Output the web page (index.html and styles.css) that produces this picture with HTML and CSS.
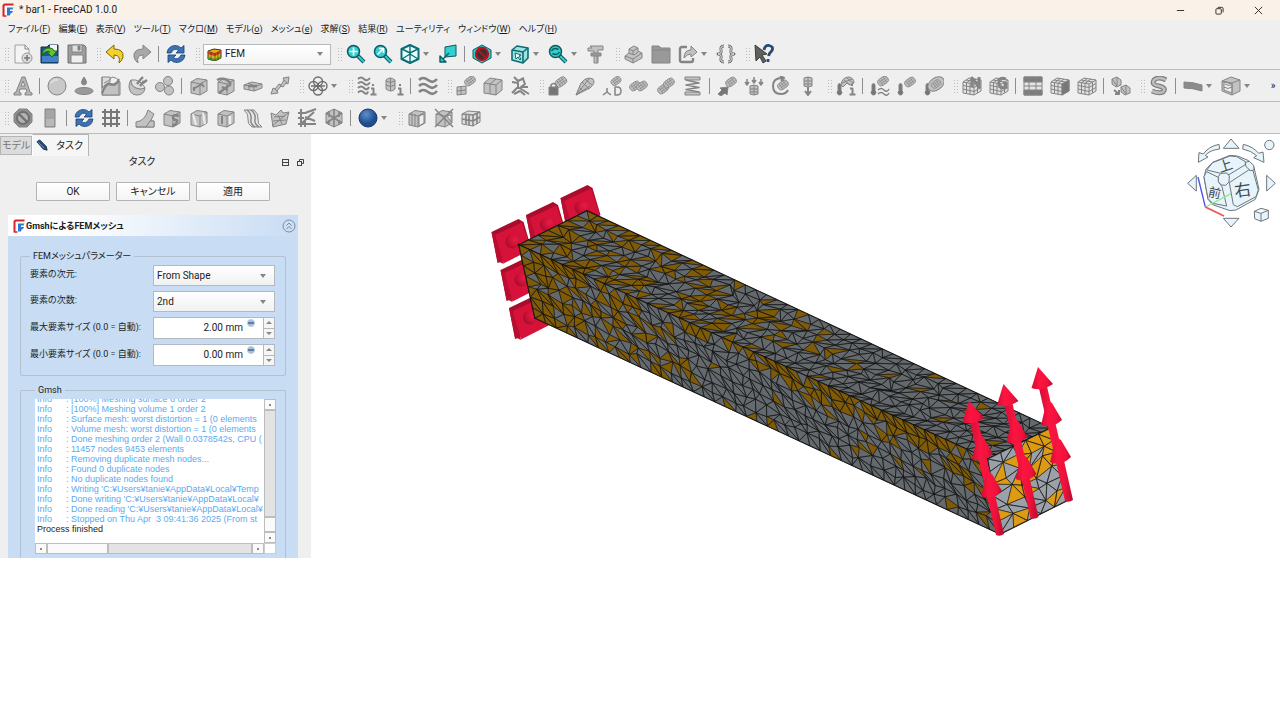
FILE: index.html
```html
<!DOCTYPE html>
<html lang="ja">
<head>
<meta charset="utf-8">
<title>* bar1 - FreeCAD 1.0.0</title>
<link rel="stylesheet" href="styles.css">
</head>
<body>
<svg class="defs" aria-hidden="true">
  <symbol id="logo" viewBox="0 0 12 14">
    <path d="M3 3h8v10H3z" fill="#fff"/>
    <path d="M1.500 13.500V3q0-1.500 1.500-1.500h8.500" fill="none" stroke="#d8232f" stroke-width="2"/>
    <path d="M1.500 13h3" stroke="#d8232f" stroke-width="1.500"/>
    <path d="M5 4.500h6.500l-1 2H8v1.500h3l-1 2-1.500.5-.5 2H5z" fill="#2f78d0"/>
  </symbol>
</svg>
<header class="titlebar">
  <svg class="logo"><use href="#logo"/></svg>
  <h1 class="title">* bar1 - FreeCAD 1.0.0</h1>
  <div class="window-buttons">
    <button aria-label="最小化"><svg viewBox="0 0 10 10"><path d="M1 5h8"/></svg></button>
    <button aria-label="元に戻す"><svg viewBox="0 0 10 10"><rect x="1" y="3" width="6" height="6" rx="1"/><path d="M3 1.500h4.500q1.500 0 1.500 1.500v4"/></svg></button>
    <button aria-label="閉じる"><svg viewBox="0 0 10 10"><path d="M1 1l8 8M9 1l-8 8"/></svg></button>
  </div>
</header>
<nav class="menubar">
  <button>ファイル(<u>F</u>)</button>
  <button>編集(<u>E</u>)</button>
  <button>表示(<u>V</u>)</button>
  <button>ツール(<u>T</u>)</button>
  <button>マクロ(<u>M</u>)</button>
  <button>モデル(<u>o</u>)</button>
  <button>メッシュ(<u>e</u>)</button>
  <button>求解(<u>S</u>)</button>
  <button>結果(<u>R</u>)</button>
  <button>ユーティリティ</button>
  <button>ウィンドウ(<u>W</u>)</button>
  <button>ヘルプ(<u>H</u>)</button>
</nav>
<div class="toolbar" role="toolbar" data-row="0" aria-label="標準"></div>
<div class="toolbar" role="toolbar" data-row="1" aria-label="FEM"></div>
<div class="toolbar" role="toolbar" data-row="2" aria-label="結果"></div>

<div class="workspace">
  <aside class="panel">
    <div class="tabs" role="tablist">
      <button class="tab" role="tab">モデル</button>
      <button class="tab tab-active" role="tab" aria-selected="true">
        <svg class="pen" viewBox="0 0 14 14"><path d="M1 3l3-2 7 7 1 4-4-1z" fill="#244a7c" stroke="#16304f"/><path d="M2 3l7 7" stroke="#6c96c8"/></svg>
        タスク
      </button>
    </div>
    <div class="dock-title">
      <h2>タスク</h2>
      <button aria-label="折りたたむ"><svg viewBox="0 0 7 7"><rect x=".5" y=".5" width="6" height="6"/><path d="M0 3.500h7"/></svg></button>
      <button aria-label="切り離す"><svg viewBox="0 0 7 7"><rect x=".5" y="2.500" width="4" height="4"/><path d="M2.500 2V.5h4v4H5"/></svg></button>
    </div>
    <div class="actions">
      <button>OK</button><button>キャンセル</button><button>適用</button>
    </div>
    <section class="task">
      <header class="task-head">
        <svg class="logo"><use href="#logo"/></svg>
        <h3>GmshによるFEMメッシュ</h3>
        <button aria-label="たたむ"><svg viewBox="0 0 14 14"><circle cx="7" cy="7" r="6"/><path d="M4.500 6.500L7 4l2.500 2.500M4.500 10L7 7.500 9.500 10"/></svg></button>
      </header>
      <div class="task-body">
        <fieldset class="group params">
          <legend>FEMメッシュパラメーター</legend>
          <label for="dim">要素の次元:</label>
          <div class="combo"><select id="dim"><option>From Shape</option></select></div>
          <label for="order">要素の次数:</label>
          <div class="combo"><select id="order"><option>2nd</option></select></div>
          <label for="max">最大要素サイズ (0.0 = 自動):</label>
          <div class="spin"><input id="max" value="2.00 mm"><i class="fx"></i><div class="steps"><button aria-label="増やす"></button><button class="down" aria-label="減らす"></button></div></div>
          <label for="min">最小要素サイズ (0.0 = 自動):</label>
          <div class="spin"><input id="min" value="0.00 mm"><i class="fx"></i><div class="steps"><button aria-label="増やす"></button><button class="down" aria-label="減らす"></button></div></div>
        </fieldset>
        <fieldset class="group output">
          <legend>Gmsh</legend>
          <div class="log">
            <div class="log-view"><div class="log-lines" role="log"></div></div>
            <div class="vbar"><i class="arrow up"></i><i class="track"></i><i class="thumb"></i><i class="arrow dn"></i></div>
            <div class="hbar"><i class="arrow lf"></i><i class="thumb"></i><i class="track"></i><i class="arrow rt"></i></div>
            <div class="corner"></div>
          </div>
        </fieldset>
      </div>
    </section>
  </aside>
  <main class="view">
    <svg class="scene" viewBox="311 134 969 586" role="img" aria-label="FEMメッシュ">
      <defs>
        <radialGradient id="ball" cx=".7" cy=".35" r=".8"><stop offset="0" stop-color="#e61c44"/><stop offset=".5" stop-color="#cf1237"/><stop offset="1" stop-color="#9c0c2a"/></radialGradient>
        <linearGradient id="cone" x1="0" x2="1"><stop offset="0" stop-color="#d00e36"/><stop offset=".35" stop-color="#fb1540"/><stop offset=".75" stop-color="#f0123c"/><stop offset="1" stop-color="#b50c2e"/></linearGradient>
        <g id="plate">
          <path d="M491.500 232L518.500 219l5 3 8 27-28 12-6 2z" fill="#a80d2c"/>
          <path d="M495 235l27-12.500 9 27-27.500 14z" fill="#d6123a"/>
          <path d="M491.500 232l3.500 3 8.500 29-6-3z" fill="#b80f31"/>
          <circle cx="512.500" cy="241.500" r="7" fill="url(#ball)"/>
        </g>
        <g id="load" fill="url(#cone)">
          <path d="M969 418l8-2 27 118q-4 3-8 1z"/>
          <path d="M987 471L981 496q11 5 21-5l-10-17z"/>
          <path d="M978 434L972 459q11 4 21-5l-10-17z"/>
          <path d="M969 401L962.500 422q10 4 21.500-4z"/>
        </g>
      </defs>
      <use href="#plate" x="69" y="-34"/>
      <use href="#plate" x="34.500" y="-17"/>
      <use href="#plate" x="17.500" y="76"/>
      <use href="#plate" x="9" y="38"/>
      <use href="#plate"/>
      <g id="mesh"></g>
      <use href="#load"/><use href="#load" x="34.500" y="-17"/><use href="#load" x="69" y="-34"/>
      <g class="navcube" transform="translate(1180 130) scale(.3333)">
        <path d="M153 27l24 28h-47zM153 291l24-26h-47zM23 160l26-24v47zM286 160l-26-24v47z"/>
        <path d="M117 43Q85 50 70 72L57 68l-2 29 29-16-8-5Q90 60 119 57z"/>
        <path d="M190 43Q220 50 236 70l13-4 3 31-31-14 9-6Q214 62 188 57z"/>
        <circle cx="268" cy="45" r="14"/>
        <path d="M223 244l20-9 22 6v24l-22 9-19-8zM223 244l20 6 22-9M243 250v24"/>
        <path d="M72 142L78 118L98 97L150 76L172 78L206 92L222 112L237 178L226 208L168 240L150 242L98 224L84 208Z"/>
        <path d="M80 120L98 98L150 78L170 80L196 95L196 104L147 134L122 130Z"/>
        <path d="M72 140L80 125L115 142L116 156L126 170L140 228L98 220L84 206Z"/>
        <path d="M148 158L206 120L219 122L235 180L228 200L172 230L160 224Z"/>
        <path d="M115 140L122 130L140 129L148 138L147 156L137 166L124 165L115 155Z"/>
        <path d="M196 97L208 94L221 106L222 120L212 122L198 110Z"/>
        <path class="z-axis" d="M76 231L54 141"/>
        <path class="y-axis" d="M76 231l77-40"/>
        <path class="x-axis" d="M76 231l56 27"/>
        <text x="163" y="198" font-size="50" transform="rotate(-8 187 180)">右</text>
        <text x="85" y="202" font-size="38" transform="rotate(12 104 188)">前</text>
        <text x="115" y="122" font-size="42" transform="rotate(-18 136 106)">上</text>
      </g>
    </svg>
  </main>
</div>
<script src="app.js"></script>
</body>
</html>
```
FILE: styles.css
```css
* { box-sizing: border-box; }
body {
  margin: 0;
  background: #fff;
  color: #1c1c1c;
  font: 10px/12px Roboto, "Noto Sans CJK JP", sans-serif;
  font-feature-settings: "palt";
  overflow: hidden;
}
button, input, select { font: inherit; color: inherit; font-feature-settings: inherit; margin: 0; padding: 0; border: 0; background: none; }
h1, h2, h3 { margin: 0; font: inherit; }
.defs { display: none; }
.logo { width: 12px; height: 14px; flex: none; }

.titlebar { display: flex; align-items: center; height: 20px; padding-left: 2px; background: #faf1e8; }
.title { flex: 1; margin-left: 5px; }
.window-buttons { display: flex; padding-right: 2px; }
.window-buttons button { width: 39px; height: 20px; display: grid; place-items: center; }
.window-buttons svg { width: 9px; height: 9px; fill: none; stroke: #222; }

.menubar { display: flex; height: 18px; padding: 0 8px; gap: 8px; background: #efefef; align-items: center; font-size: 9px; }
.menubar button { white-space: nowrap; }

.toolbar { display: flex; align-items: center; height: 32px; padding-top: 1px; background: #efefef; border-bottom: 1px solid #bdbdbd; }
.grip { flex: none; width: 11px; height: 15px; display: flex; justify-content: flex-end; }
.grip::after { content: ""; width: 5px; background: radial-gradient(circle, #bbb 1px, transparent 1px) 0 0 / 3px 3px; }
.grip:first-child { width: 9px; }
.tool { flex: none; width: 27px; height: 26px; display: grid; place-items: center; }
.tool svg { width: 20px; height: 20px; fill: #c2c2c2; stroke: #848484; stroke-linejoin: round; }
.sep { flex: none; width: 7px; height: 16px; display: flex; justify-content: center; }
.sep::after { content: ""; width: 1px; background: #8d8d8d; }
.caret { flex: none; width: 11px; height: 20px; display: flex; align-items: center; justify-content: flex-start; }
.caret::after, .combo::after, .toolbar-combo::after { content: ""; border: 3px solid transparent; border-top: 4px solid #858585; border-bottom: 0; }
.more { margin-left: auto; width: 14px; }
.toolbar-combo { display: flex; align-items: center; flex: none; width: 128px; height: 21px; margin-left: 3px; padding: 0 7px 0 3px; border: 1px solid #b9b9b9; background: linear-gradient(#fff, #f4f4f4); }
.toolbar-combo svg { width: 15px; height: 13px; }
.toolbar-combo select { flex: 1; appearance: none; margin-left: 3px; }

.workspace { display: flex; align-items: flex-start; }
.panel { flex: none; width: 311px; padding-right: 13px; background: #efefef; }
.tabs { display: flex; align-items: flex-end; height: 22px; }
.tab { height: 19px; padding: 0 1px; border: 1px solid #b5b5b5; background: #dcdcdc; color: #777; margin-bottom: 1px; }
.tab-active { display: flex; align-items: center; height: 22px; width: 57px; padding-left: 3px; gap: 7px; margin-bottom: 0; background: #f6f6f6; color: #1c1c1c; border-left-color: #fff; border-bottom: 0; white-space: nowrap; }
.pen { width: 13px; height: 13px; }
.dock-title { display: flex; align-items: center; height: 12px; gap: 8px; padding-left: 10px; margin-right: -6px; }
.dock-title h2 { flex: 1; text-align: center; }
.dock-title svg { display: block; width: 7px; height: 7px; fill: none; stroke: #444; }
.actions { display: flex; gap: 6px; padding: 14px 28px 14px 36px; }
.actions button { flex: 1; height: 19px; border: 1px solid #b4b4b4; border-radius: 1px; background: linear-gradient(#fff, #f4f4f4); }

.task { margin-left: 8px; }
.task-head { display: flex; align-items: center; height: 21px; padding: 0 2px 0 5px; background: linear-gradient(90deg, #fff, #fff 20%, #c8dcf4); }
.task-head h3 { flex: 1; font-size: 9px; font-weight: bold; margin-left: 1px; }
.task-head button svg { display: block; width: 14px; height: 14px; fill: none; stroke: #7d8da3; }
.task-body { padding: 14px 12px 0; background: #c8dcf4; }
.group { min-width: 0; margin: 0; border: 1px solid #b3c0cf; border-radius: 2px; }
.group legend { padding: 0 3px; font-size: 9px; }
.params { display: grid; grid-template-columns: minmax(0, 1fr) 122px; row-gap: 5px; align-items: center; padding: 3px 10px 9px 9px; }
.params label { white-space: nowrap; padding-bottom: 3px; font-size: 9px; }
.combo, .spin { position: relative; display: flex; align-items: center; height: 21px; border: 1px solid #b4b9c0; background: linear-gradient(#fff, #f1f1f1); }
.combo { padding: 0 8px 0 3px; }
.combo select { flex: 1; appearance: none; }
.spin { height: 22px; background: #fff; }
.spin input { flex: 1; min-width: 0; text-align: right; padding-right: 20px; }
.fx { position: absolute; right: 19px; top: 1px; width: 8px; height: 8px; border-radius: 4px; background: #a3bdd8; border: 1px solid #b8cce0; }
.fx::after { content: ""; display: block; height: 2px; margin-top: 2px; background: #5d7fa3; }
.steps { display: flex; flex-direction: column; width: 11px; align-self: stretch; border-left: 1px solid #b4b9c0; background: #f5f5f5; }
.steps button { flex: 1; display: grid; place-items: center; }
.steps .down { border-top: 1px solid #b4b9c0; }
.steps button::after { content: ""; border: 3px solid transparent; border-top: 0; border-bottom: 3px solid #888; }
.steps .down::after { border-bottom: 0; border-top: 3px solid #888; }

.output { margin-top: 8px; padding: 3px 9px 4px 14px; border-bottom: 0; border-radius: 2px 2px 0 0; }
.log { display: grid; grid-template: 144px 11px / minmax(0, 1fr) 12px; background: #fff; }
.log-view { overflow: hidden; display: flex; align-items: flex-end; padding: 0 0 9px 2px; }
.log-lines { flex: 1; min-width: 0; font-family: "Liberation Sans", sans-serif; font-size: 9px; line-height: 10px; color: #5aaaf0; }
.line { display: flex; white-space: pre; }
.line b { flex: none; width: 29px; font-weight: normal; }
.line.done { color: #1c1c1c; }
.vbar { display: flex; flex-direction: column; }
.hbar { display: flex; }
.vbar i, .hbar i { border: 1px solid #bdbdbd; background: #fafafa; }
.vbar .track, .hbar .track { flex: 1; background: #e3e3e3; }
.vbar .thumb { height: 15px; }
.hbar .thumb { width: 61px; }
.arrow { flex: none; width: 12px; height: 11px; display: grid; place-items: center; }
.arrow::after { content: ""; width: 2px; height: 2px; background: #8a8a8a; }
.corner { border: 1px solid #ccc; }

.view { flex: 1; min-width: 0; }
.scene { display: block; width: 100%; }
.navcube { fill: #e8f4fb; stroke: #6d757c; stroke-width: 3; stroke-linejoin: round; }
.navcube .x-axis { stroke: #f05050; stroke-width: 5; fill: none; }
.navcube .y-axis { stroke: #90e890; stroke-width: 4; fill: none; }
.navcube .z-axis { stroke: #5050f0; stroke-width: 4; fill: none; }
.navcube text { fill: #40484e; stroke: none; font-family: "Noto Sans CJK JP", sans-serif; }
```
FILE: app.js
```js
// Small building blocks shared by the toolbar icons.
const rod = (x = 12, y = 6, s = 1) =>
  `<g transform="translate(${x} ${y}) rotate(-35) scale(${s})"><rect x="-7" y="-4.500" width="14" height="9" rx="4"/><path d="M-5-1.500H6M-5 1.500H6M-3-4v8M0-4v8M3-4v8" fill="none" stroke-width=".8"/></g>`;
const box = (inner = '') =>
  `<path d="M2 6l6-3.500 10 1.500v11l-7 4-9-2z"/><path d="M2 6l9 2 7-4M11 8v11" fill="none"/>${inner}`;
const meshBox = (inner = '') =>
  `<path d="M1 6l6-4 12 2v11l-7 4-11-2z" fill="#e0e0e0"/><path d="M1 6l11 2 7-4M12 8v11M1 9.500l11 2 7-4M1 13l11 2.500 7-4M4.500 7v10.500M8 7.500v11M15.500 6v11M4 4l11.500 2M10 2.500L4.500 7M14 3L8 7.500" fill="none"/>${inner}`;
const thermo = '<path d="M2 8.500q1.500-2 3 0v6q2 2 0 4-1.500 1-3 0-2-2 0-4z" fill="#777"/>';
const wave = (y) => `<path d="M1 ${y}q4-4 9 0t9-1" fill="none" stroke-width="2.600"/>`;
const info = '<path d="M15 9h2M14 12.500h2.500V18M13.500 18.500h6" fill="none" stroke-width="2"/>';
const teal = 'fill="#2fd0cf" stroke="#0b5a63"';
const lens = (inner) =>
  `<path d="M11 11l7 7" stroke="#0b5a63" stroke-width="4"/><path d="M12 12l6 6" stroke="#2fd0cf" stroke-width="2"/><circle cx="7.500" cy="7.500" r="6" ${teal} stroke-width="1.500"/><g fill="none" stroke="#fff" stroke-width="1.600">${inner}</g>`;
const sync =
  '<g fill="#3b73b5" stroke="#173f72" stroke-width=".8"><path d="M1 9Q2 2 9 1.500q4 0 6 2.500l3-2.500V9h-8l2.500-2.500Q8 3 5 9z"/><path d="M19 11q-1 7-8 7.500-4 0-6-2.500l-3 2.500V11h8l-2.500 2.500Q12 17 15 11z"/></g>';

const icons = {
  doc: '<path d="M2 1h10l4 4v14H2z" fill="#f4f4f4" stroke="#a0a0a0"/><path d="M12 1v4h4" fill="none"/><circle cx="14" cy="14" r="5" fill="#ddd" stroke="#999"/><path d="M14 11v6M11 14h6" stroke="#777" stroke-width="1.600"/>',
  open: '<path d="M1 3h6l2-2h9v18H1z" fill="#1c5690" stroke="#0f2d50"/><path d="M10 1h7v6h-7z" fill="#f4f4f4" stroke="none"/><path d="M2 12h16v6H2z" fill="#3f83c6" stroke="none"/><path d="M2 11Q3 3 10 4q3 0 4 3h3l-5 6-5-5h3Q6 6 2 11z" fill="#63c132" stroke="#1f6b14"/>',
  save: '<path d="M1 1h16l2 2v16H1z" fill="#9d9d9d" stroke="#707070"/><path d="M5 1h10v7H5z" fill="#dedede"/><path d="M4 11h12v8H4z" fill="#f0f0f0"/><path d="M11 2h2v4h-2z" fill="#777"/>',
  undo: '<path d="M1 8l8-7v4q10 0 9 8-1 4-4 6 2-8-5-8v4z" fill="#f3d22d" stroke="#7d6608"/>',
  redo: '<path d="M19 8l-8-7v4Q1 5 2 13q1 4 4 6-2-8 5-8v4z" fill="#a9a9a9"/>',
  sync,
  fit: lens('<path d="M7.500 3.500v8M3.500 7.500h8"/>'),
  zoomsel: lens('<path d="M4.500 10.500l5-5M6 4.500h4.500V9"/>'),
  iso: '<path d="M1.500 5L10 1l8.500 4v10L10 19l-8.500-4z" fill="#e9ffff" stroke="#0d6d74" stroke-width="2"/><path d="M2 5l8 4 8-4M10 9v10M2 15l8-5 8 5M10 1v9" fill="none" stroke="#0d6d74" stroke-width="1.400"/>',
  bound: `<path d="M7 3l11-2v11l-11 1z" ${teal}/><path d="M11 9l-6 6M2 12v6h6z" fill="#2fd0cf" stroke="#0b5a63" stroke-width="1.400"/>`,
  block: `<path d="M1 6l9-5 9 5v8l-9 5-9-5z" ${teal}/><circle cx="10" cy="10" r="6" fill="#333" stroke="#b9111b" stroke-width="2.400"/><path d="M6 6l8 8" stroke="#b9111b" stroke-width="2.400"/>`,
  wire: '<path d="M2 6l5-4 11 2v10l-5 5-11-3z" fill="#9ae4e3" stroke="#0d6d74" stroke-width="1.600"/><path d="M2 6l11 2 5-4M13 8v11" fill="none" stroke="#0d6d74" stroke-width="1.600"/><path d="M5 9l6 2-2 1 2 3-1 1-2-3-2 2z" fill="#fff" stroke="#0d6d74"/>',
  sync2: lens('<path d="M3.500 7q2-4 7-1.500M11.500 8q-2 4-7 1.500" stroke="#0b5a63"/>'),
  caliper: '<path d="M4 2h13v4h-5v13H8V7H2V4h4z"/><path d="M5 9h10v3H5z" fill="#999"/><path d="M10 13h2M10 15h2M10 17h2"/>',
  steps: '<path d="M1 12l4-3V5l5-3 4 2v3l4 2v5L9 19l-8-4z"/><path d="M1 12l8 3 9-6M9 15v4M5 9l5 2 4-3M5 5l4 2 5-3M9 7v4" fill="none"/>',
  folder: '<path d="M1 2h7l2 2h9v15H1z" fill="#999"/><path d="M1 6h18"/>',
  share: '<path d="M9 3H4Q2 3 2 5v11q0 2 2 2h9q2 0 2-2v-2" fill="none" stroke-width="2.400"/><path d="M6 14q0-8 7-8V2l6 6-6 5v-3q-4 0-7 4z"/>',
  braces: '<path d="M8 2Q4 2 5 6t-3 4q4 0 3 4t3 4M12 2q4 0 3 4t3 4q-4 0-3 4t-3 4" fill="none" stroke="#666" stroke-width="2.800"/><path d="M8 2Q4 2 5 6t-3 4q4 0 3 4t3 4M12 2q4 0 3 4t3 4q-4 0-3 4t-3 4" fill="none" stroke="#eee" stroke-width="1"/>',
  whats: '<path d="M10 6Q11 1 15 1.500q5 1 3 5-3 3-3.500 5.500M14 15v3" fill="none" stroke="#294b73" stroke-width="2.800"/><path d="M1 1l12 9-5 1 4 6-3 2-3-6-4 4z" fill="#5e625e" stroke="#3b3e3b"/>',
  letter: '<path d="M1 19v-2l2-1L9 1h3l5 15 2 1v2h-7v-2l2-1-1-3H7l-1 3 2 1v2zM8 10h4L10 5z" fill="#b5b5b5"/>',
  sphere: '<circle cx="10" cy="10" r="9" fill="#c8c8c8"/><path d="M4 7q3-4 7-3" fill="none" stroke="#ddd" stroke-width="2"/>',
  drop: '<ellipse cx="10" cy="15" rx="9" ry="3.500" fill="#9a9a9a"/><path d="M10 1q5 7 0 8-5-1 0-8z" fill="#888"/>',
  chart: '<path d="M1 1h8v5q-5 2-8 6z" fill="#ddd"/><path d="M1 1v18h18V6q-3-5-8-5-2 4-8 6" fill="none"/><path d="M1 19Q5 7 10 9t8-4v14z"/><path d="M1 17Q5 6 10 8t8-5" fill="none" stroke-width="2"/>',
  plug: '<path d="M3 4q0 6 5 8t9 0q-1 7-8 7T1 11q0-5 2-7z"/><path d="M3 4q5-1 9 2t5 6q-4 2-9 0T3 4z" fill="#e0e0e0"/><path d="M9 8l4-5M12 10l4-5M12 4l3-3M15 7l4-3" stroke-width="2.400"/>',
  balls: '<circle cx="13" cy="5" r="4.500"/><circle cx="5" cy="11" r="4.500"/><circle cx="14" cy="14.500" r="4.500"/>',
  slot: box('<path d="M4 13l9-5M5 11v4M12 7l3 4" stroke-width="2"/>'),
  slot2: box('<path d="M1 4q8-4 14 4M3 17l12-9M6 11l6 3" stroke-width="2.200" fill="none"/>'),
  slab: '<path d="M1 9l8-3 10 2v4l-8 3-10-2z"/><path d="M1 9l10 2 8-3M11 11v4M5 7l9 4M6 10v4" fill="none"/><path d="M5 10l9 0" stroke-width="2.500"/>',
  rods: '<path d="M1 18l2-6 2 1 4-5 2 1 3-5-1-2 6-1-1 7-2-1-3 4-2-1-4 5 1 2z"/><path d="M5 13l3 3M9 8l3 3M14 4l3 3"/>',
  target: '<g fill="none" stroke="#6d6d6d" stroke-width="1.400"><circle cx="10" cy="5.500" r="4.500"/><circle cx="10" cy="14.500" r="4.500"/><circle cx="5.500" cy="10" r="4.500"/><circle cx="14.500" cy="10" r="4.500"/><path d="M10 7v6M3 10h4M13 10h4"/></g>',
  fluidinfo: '<path d="M1 3q3-3 6 0t6-1M1 7.500q3-3 6 0t6-1M1 12q3-3 6 0t5-1M1 16.500q3-3 6 0t4-1" fill="none" stroke-width="2"/>' + info,
  solidinfo: '<path d="M2 4q4-4 9 0v9q-4 4-9 0z"/><path d="M2 5q4 3 9 0M2 9q4 3 9 0M6.500 2v13" fill="none"/>' + info,
  fluid: wave(4) + wave(10) + wave(16),
  rodplus: rod(14, 5, .8) + '<path d="M1 11l9-1v8l-9 1zM5 11v8M1 15l9-1"/>',
  crate: '<path d="M1 7l6-5 12 2v10l-6 5-12-2z"/><path d="M1 7l12 2 6-5M13 9v10M7 8l6-5M7 8v10" fill="none"/>',
  crack: '<path d="M4 1l4 4 6-3M2 6l6 1v4l-6 6M8 11l11 7M13 3l2 5-4 3 7 0M4 18l6-3 5 4" fill="none" stroke-width="2"/>',
  lock: rod(13, 6, .85) + '<path d="M1 11h9v8H1z" fill="#777"/><path d="M3 11V9q2.500-3 5 0v2" fill="none" stroke-width="1.600"/>',
  cone: '<path d="M1 19l5-12q6-7 12-4 3 4-3 9z"/><path d="M1 19L14 3M1 19l14-9M7 6l7 7M10 3l7 6M4 11l4 4" fill="none"/>',
  rodd: rod(14, 5, .75) + '<path d="M5 12v4l-4 3M5 16l4 3M13 11h2q4 0 4 4t-4 4h-2z" fill="none" stroke-width="1.500"/>',
  rodpair: rod(6, 10, .8) + rod(13, 10, .8),
  rodlong: rod(7, 13, .8) + rod(13, 7, .8),
  spring: '<path d="M2 1h15v3H2zM2 16h15v3H2z"/><path d="M3 4l13 3-13 2 13 2.500-13 2 13 2.500" fill="none" stroke-width="1.600"/>',
  rodarrow: rod(14, 6, .8) + '<path d="M1 18l4-4-2-2 8-1-1 8-2-2-4 3z" fill="#777"/>',
  pressure: '<path d="M6 10q4-2 8 0v8q-4 2-8 0z"/><path d="M6 13h8M6 16h8M10 9v10" fill="none"/><path d="M3 3v6M10 1v6M17 3v6M1 6l2 3 2-3M8 4l2 3 2-3M15 6l2 3 2-3" fill="none" stroke-width="1.500"/>',
  rotate: rod(12, 9, .8) + '<path d="M11 2Q2 2 2 10t8 8q5 0 7-4M9 0l4 2-3 3" fill="none" stroke-width="2"/>',
  weight: '<path d="M6 2q4-2 8 0v8q-4 2-8 0z"/><path d="M6 5h8M6 8h8M10 1v9" fill="none"/><path d="M10 11v7M7 15l3 4 3-4" fill="none" stroke-width="2"/>',
  tempinfo: thermo + '<path d="M5 9q1-8 8-8 5 1 5 6l-4 2-3-2-4 4z"/><path d="M8 4l6 5M11 2l6 5M6 7l10-4" fill="none"/>' + info,
  tempflux: thermo + rod(13, 5, .8) + '<path d="M8 14q3-3 6 0t5-1M8 18q3-3 6 0t5-1" fill="none" stroke-width="1.500"/>',
  temprod: thermo + rod(13, 6, .8),
  tempbody: thermo + '<ellipse cx="12" cy="8" rx="9" ry="6" transform="rotate(-35 12 8)"/>' + rod(12, 8, .7),
  netgen: meshBox('<path d="M10 11V2l7 9V1" fill="none" stroke-width="3"/>'),
  gmsh: meshBox('<path d="M17 3q-7-3-7 4t7 4V7h-3" fill="none" stroke-width="2.600"/>'),
  rows: '<path d="M1 1h18v18H1z" fill="#e4e4e4"/><path d="M1 1h18v5H1zM1 14h18v5H1z" fill="#7d7d7d"/><path d="M6 1v18M13 1v18M1 10h18" fill="none"/>',
  meshhalf: meshBox('<path d="M12 8l7-4v11l-7 4z" fill="#777"/>'),
  mesh: meshBox(),
  tomesh: '<path d="M1 3l5-2 4 3v5l-5 2-4-3z"/><path d="M10 11l5-2 4 3v5l-5 2-4-3zM1 3l5 7M10 11l5 7M6 1v9M15 9v9"/><path d="M3 14l5 4M8 14v4H4" fill="none" stroke-width="2"/>',
  solver: '<path d="M17 4Q10 0 5 4q-3 5 5 6 8 2 4 6-4 2-11-1" fill="none" stroke="#7f7f7f" stroke-width="5"/><path d="M17 4Q10 0 5 4q-3 5 5 6 8 2 4 6-4 2-11-1" fill="none" stroke="#bdbdbd" stroke-width="2.500"/>',
  beam: '<path d="M1 6q9 0 18 3v6Q10 12 1 12z" fill="#8b8b8b"/>',
  clip: '<path d="M1 5l9-4 9 3v11l-8 4-10-4z"/><path d="M3 6l8 2v9l-8-3z" fill="#eee"/><path d="M11 7l8-3M11 7v12M1 5l10 2M3 11q4 3 8 0M4 8q3 2 6 1" fill="none"/>',
  nope: '<path d="M6 1h8l5 5v8l-5 5H6l-5-5V6z" fill="#8e8e8e"/><circle cx="10" cy="10" r="6" fill="#b4b4b4" stroke="#707070" stroke-width="2"/><path d="M6 6l8 8" stroke="#707070" stroke-width="2.400"/>',
  bar: '<path d="M5 1h10v18H5z" fill="#a4a4a4"/><path d="M6 11h8v7H6z" fill="#b8b8b8" stroke="none"/>',
  grid: '<path d="M1 4h18M1 10h18M1 16h18M4 1v18M10 1v18M16 1v18" fill="none" stroke="#777" stroke-width="2"/>',
  bend: '<path d="M1 14q9-1 12-12l6 4q-3 8-8 13H1z"/><path d="M1 19h18v-6h-4" fill="none"/><path d="M11 19l4-6h4v6z"/>',
  boxs: box('<path d="M17 8q-6-2-6 1t3 3-1 5l-3 0" stroke-width="2.600" fill="none"/>'),
  boxa: box('<path d="M4 6l3 11M14 5l2 11" stroke="#eee" stroke-width="2"/>'),
  boxb: box('<path d="M14 8v8" stroke="#eee" stroke-width="2.500"/><path d="M6 8v8" stroke-width="2"/>'),
  curves: '<path d="M1 2h10q5 4 4 9t4 8H9q-5-3-4-8T1 2z" fill="#e6e6e6"/><path d="M4 2q5 4 4 9t4 8M8 2q5 4 4 9t4 8" fill="none" stroke-width="1.400"/>',
  plane: '<path d="M1 5l5 2 5-5 2 3 6-1-3 12-13 3z"/><path d="M2 18L18 5M4 9l11-1M3 13l13-1M8 7l4 9" fill="none"/>',
  axes: '<path d="M4 1v18M1 16h18M1 5h7l11-4M5 15L17 4M8 9l10 4M1 10h6M8 12v7" fill="none" stroke-width="2"/>',
  cubex: '<path d="M2 5l8-4 8 4v10l-8 4-8-4z"/><path d="M2 5l16 10M18 5L2 15M10 1v18M5 3v6M15 3v6M5 12v5M15 12v5" fill="none" stroke-width="1.600"/>',
  globe: '<defs><radialGradient id="gl" cx=".4" cy=".3"><stop offset="0" stop-color="#5d8fcb"/><stop offset="1" stop-color="#1f4d92"/></radialGradient></defs><circle cx="10" cy="10" r="9" fill="url(#gl)" stroke="#16315c"/>',
  filtera: box('<path d="M12 8l5-2v9l-5 3z" fill="#eee"/><path d="M5 5v12M8 6v12"/>'),
  filterb: box('<path d="M1 1l18 18M19 1L1 19" stroke-width="1.500"/><path d="M13 8l4-1v7z" fill="#eee"/>'),
  filterc: '<path d="M1 6l6-3 12 1v10l-7 4-11-2z" fill="#ddd"/><path d="M1 6l11 1 7-3M12 7v11M1 11l11 2 7-4M5 6v10M8 7v10M16 6v10" fill="none" stroke-width="1.600"/>'
};

// "|" separator, ":" grip, "v" drop-down arrow, "FEM" workbench selector.
const rows = [
  ': doc open save : undo redo | sync : FEM : fit zoomsel iso v bound | block v wire v sync2 v caliper : steps folder share v braces : whats',
  ': letter | sphere drop chart plug balls | slot slot2 slab rods : target v : fluidinfo solidinfo | fluid : rodplus crate crack : lock cone rodd rodpair rodlong spring | rodarrow pressure rotate weight : tempinfo | tempflux temprod tempbody : netgen gmsh | rows meshhalf mesh | tomesh : solver | beam v clip v more',
  ': nope bar | sync grid | bend boxs boxa boxb curves plane axes cubex | globe v : filtera filterb filterc'
];
const parts = {
  '|': '<span class="sep"></span>',
  ':': '<span class="grip"></span>',
  v: '<button class="caret" aria-label="メニュー"></button>',
  more: '<button class="more">»</button>',
  FEM: '<div class="toolbar-combo"><svg viewBox="0 0 15 13"><path d="M1 3l6-2 7 1v8l-6 3-7-2z" fill="#d9b21d" stroke="#3c3510"/><path d="M1 3l7 2 6-3v3L8 8 1 6z" fill="#cf3a1e"/><path d="M1 9l7 2 6-3v2l-6 3-7-2z" fill="#4c9c2e"/><path d="M8 5v8M4 4v8M11 4v8" stroke="#3c3510" stroke-width=".6"/></svg><select aria-label="ワークベンチ"><option>FEM</option></select></div>'
};
document.querySelectorAll('.toolbar').forEach((bar) => {
  bar.innerHTML = rows[bar.dataset.row].split(' ').map((name) =>
    parts[name] || `<button class="tool" aria-label="${name}"><svg viewBox="0 0 20 20">${icons[name]}</svg></button>`
  ).join('');
});

const log = [
  '[100%] Meshing surface 6 order 2',
  '[100%] Meshing volume 1 order 2',
  'Surface mesh: worst distortion = 1 (0 elements',
  'Volume mesh: worst distortion = 1 (0 elements',
  'Done meshing order 2 (Wall 0.0378542s, CPU (',
  '11457 nodes 9453 elements',
  'Removing duplicate mesh nodes...',
  'Found 0 duplicate nodes',
  'No duplicate nodes found',
  "Writing 'C:¥Users¥tanie¥AppData¥Local¥Temp",
  "Done writing 'C:¥Users¥tanie¥AppData¥Local¥",
  "Done reading 'C:¥Users¥tanie¥AppData¥Local¥",
  'Stopped on Thu Apr  3 09:41:36 2025 (From st'
];
document.querySelector('.log-lines').innerHTML =
  log.map((t) => `<div class="line"><b>Info</b>: ${t}</div>`).join('') +
  '<div class="line done">Process finished</div>';

// Triangulated beam faces: staggered rows of jittered nodes mapped onto a quad.
let seed = 7;
const rnd = () => (seed = (seed * 16807) % 2147483647) / 2147483647;
function face(quad, nu, nv, base, accent, chance, flip) {
  const [a, b, c, d] = quad; // a-b runs along u, a-d along v
  const at = (u, v) => [0, 1].map((k) =>
    (a[k] * (1 - u) + b[k] * u) * (1 - v) + (d[k] * (1 - u) + c[k] * u) * v);
  const grid = [];
  for (let i = 0; i <= nu; i++) {
    grid.push([]);
    for (let j = 0; j <= nv; j++) {
      const inU = i > 0 && i < nu, inV = j > 0 && j < nv;
      const u = (i + (inU && inV ? (j % 2 ? .3 : 0) + (rnd() - .5) * .5 : 0)) / nu;
      const v = (j + (inU && inV ? (rnd() - .5) * .5 : 0)) / nv;
      grid[i].push([u, v]);
    }
  }
  const paths = { [base]: '', [accent]: '' };
  const tri = (p, q, r) => {
    const u = (p[0] + q[0] + r[0]) / 3, v = (p[1] + q[1] + r[1]) / 3;
    const pts = [p, q, r].map(([x, y]) => at(x, y).map((n) => n.toFixed(1)).join(' '));
    paths[rnd() < chance(u, v) ? accent : base] += `M${pts.join('L')}z`;
  };
  for (let i = 0; i < nu; i++) for (let j = 0; j < nv; j++) {
    const p = grid[i][j], q = grid[i + 1][j], r = grid[i + 1][j + 1], s = grid[i][j + 1];
    if (rnd() < flip) { tri(p, q, r); tri(p, r, s); } else { tri(p, q, s); tri(q, r, s); }
  }
  return `<path d="M${quad.map((p) => p.join(' ')).join('L')}z" fill="${base}" stroke="#0c0c0c" stroke-width="1.600"/>` +
    Object.entries(paths).map(([fill, d]) => `<path d="${d}" fill="${fill}" stroke="#141414" stroke-width=".6" stroke-linejoin="round"/>`).join('');
}
const A = [519, 245], B = [587, 211], C = [1051, 428], D = [988, 459];
const A2 = [535, 318], D2 = [1000, 534], C2 = [1068, 500];
document.getElementById('mesh').innerHTML =
  face([A, D, C, B], 44, 7, '#64696d', '#7f5b08', (u) => Math.max(.03, .6 - u * .85), .7) +
  face([A, D, D2, A2], 44, 7, '#64696d', '#7f5b08',
    (u, v) => u < .35 ? .75 - u * 1.5 : (v < .3 - Math.abs(u - .75) * .45 ? .85 : (u > .88 && v < .6 ? .4 : .06)), .6) +
  face([D, C, C2, D2], 5, 6, '#9aa1a9', '#dc9b12', (u, v) => u > .5 && v < .5 ? .85 : .3, .5);
```
